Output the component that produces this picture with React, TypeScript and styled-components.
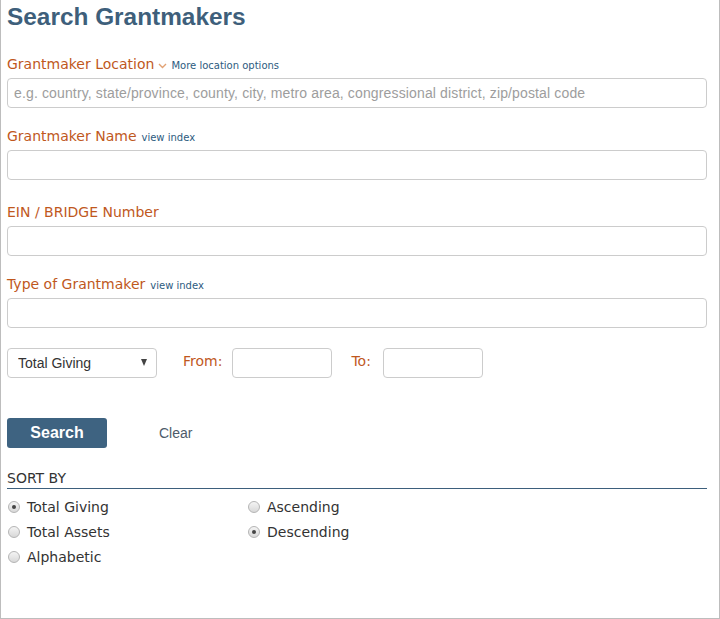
import { FC } from "react";
import styled, { createGlobalStyle } from "styled-components";

const GlobalStyle = createGlobalStyle`
  html, body {
    margin: 0;
    padding: 0;
    background: #ffffff;
  }
  * {
    box-sizing: border-box;
  }
`;

const Page = styled.div`
  width: 720px;
  height: 619px;
  border: 1px solid #bdbdbd;
  border-top: none;
  padding: 0 12px 0 6px;
  font-family: "DejaVu Sans", Verdana, sans-serif;
`;

const Title = styled.h1`
  margin: 0;
  padding-top: 2px;
  height: 32px;
  line-height: 30px;
  font-family: "Liberation Sans", Arial, sans-serif;
  font-size: 24.4px;
  font-weight: bold;
  color: #3e5f7b;
`;

const Field = styled.div<{ $top: number }>`
  margin-top: ${(p) => p.$top}px;
`;

const LabelRow = styled.div`
  display: flex;
  align-items: baseline;
  height: 20px;
  line-height: 20px;
  margin-bottom: 4px;
`;

const Label = styled.label`
  font-size: 14px;
  color: #c0581d;
`;

const SmallLink = styled.a`
  font-size: 10px;
  color: #2d5b80;
  text-decoration: none;
  margin-left: 5px;
`;

const Chevron = styled.svg`
  width: 9px;
  height: 6px;
  margin-left: 4px;
  margin-right: -1px;
  align-self: center;
  position: relative;
  top: 2px;
`;

const TextInput = styled.input<{ $width?: number }>`
  display: block;
  width: ${(p) => (p.$width ? `${p.$width}px` : "100%")};
  height: 30px;
  border: 1px solid #cccccc;
  border-radius: 4px;
  padding: 0 6px;
  font-family: "Liberation Sans", Arial, sans-serif;
  font-size: 14px;
  letter-spacing: 0.14px;
  color: #333;
  background: #fff;
  outline: none;

  &::placeholder {
    color: #9d9d9d;
  }
`;

const RangeRow = styled.div`
  display: flex;
  align-items: center;
  margin-top: 20px;
  height: 30px;
`;

const SelectWrap = styled.div`
  position: relative;
  width: 150px;
  height: 30px;
`;

const Select = styled.select`
  appearance: none;
  width: 100%;
  height: 30px;
  border: 1px solid #cccccc;
  border-radius: 4px;
  padding: 0 0 0 10px;
  font-family: "Liberation Sans", Arial, sans-serif;
  font-size: 14px;
  color: #333;
  background: #fff;
  outline: none;
`;

const SelectArrow = styled.span`
  position: absolute;
  right: 10px;
  top: 11px;
  width: 0;
  height: 0;
  border-left: 3.5px solid transparent;
  border-right: 3.5px solid transparent;
  border-top: 7px solid #444;
  pointer-events: none;
`;

const RangeLabel = styled.span<{ $left: number; $right: number }>`
  font-size: 14px;
  color: #c0581d;
  margin-left: ${(p) => p.$left}px;
  margin-right: ${(p) => p.$right}px;
  position: relative;
  top: -2px;
`;

const Actions = styled.div`
  display: flex;
  align-items: center;
  margin-top: 40px;
  height: 30px;
`;

const SearchButton = styled.button`
  width: 100px;
  height: 30px;
  border: none;
  border-radius: 3px;
  background: #3e6381;
  color: #ffffff;
  font-family: "Liberation Sans", Arial, sans-serif;
  font-size: 16px;
  font-weight: bold;
  cursor: pointer;
`;

const ClearLink = styled.a`
  margin-left: 52px;
  font-family: "Liberation Sans", Arial, sans-serif;
  font-size: 14px;
  color: #4e5b6a;
  text-decoration: none;
`;

const SortHeading = styled.div`
  margin-top: 20px;
  height: 21px;
  line-height: 20px;
  font-size: 14px;
  color: #333;
  border-bottom: 1px solid #3d5f7c;
`;

const SortGrid = styled.div`
  display: grid;
  grid-template-columns: 240px 1fr;
  grid-auto-flow: column;
  grid-template-rows: repeat(3, 25px);
  margin-top: 5px;
`;

const RadioRow = styled.label`
  display: flex;
  align-items: center;
  font-size: 14px;
  color: #333;
  height: 25px;
`;

const Radio = styled.input`
  appearance: none;
  margin: 0 7px 0 1px;
  width: 12px;
  height: 12px;
  border-radius: 50%;
  border: 1px solid #b5b5b5;
  background: linear-gradient(#f4f4f4, #d8d8d8);
  position: relative;

  &:checked::after {
    content: "";
    position: absolute;
    left: 3px;
    top: 3px;
    width: 4px;
    height: 4px;
    border-radius: 50%;
    background: #444;
  }
`;

interface SortOption {
  label: string;
  name: string;
  checked: boolean;
}

const sortOptions: (SortOption | null)[] = [
  { label: "Total Giving", name: "sortField", checked: true },
  { label: "Total Assets", name: "sortField", checked: false },
  { label: "Alphabetic", name: "sortField", checked: false },
  { label: "Ascending", name: "sortDir", checked: false },
  { label: "Descending", name: "sortDir", checked: true },
  null,
];

const App: FC = () => {
  return (
    <>
      <GlobalStyle />
      <Page>
        <Title>Search Grantmakers</Title>

        <Field $top={22}>
          <LabelRow>
            <Label>Grantmaker Location</Label>
            <Chevron viewBox="0 0 9 6">
              <path
                d="M1 1l3.5 3.5L8 1"
                fill="none"
                stroke="#e2a274"
                strokeWidth="1.4"
              />
            </Chevron>
            <SmallLink href="#">More location options</SmallLink>
          </LabelRow>
          <TextInput placeholder="e.g. country, state/province, county, city, metro area, congressional district, zip/postal code" />
        </Field>

        <Field $top={18}>
          <LabelRow>
            <Label>Grantmaker Name</Label>
            <SmallLink href="#">view index</SmallLink>
          </LabelRow>
          <TextInput />
        </Field>

        <Field $top={22}>
          <LabelRow>
            <Label>EIN / BRIDGE Number</Label>
          </LabelRow>
          <TextInput />
        </Field>

        <Field $top={18}>
          <LabelRow>
            <Label>Type of Grantmaker</Label>
            <SmallLink href="#">view index</SmallLink>
          </LabelRow>
          <TextInput />
        </Field>

        <RangeRow>
          <SelectWrap>
            <Select defaultValue="giving">
              <option value="giving">Total Giving</option>
              <option value="assets">Total Assets</option>
            </Select>
            <SelectArrow />
          </SelectWrap>
          <RangeLabel $left={26} $right={10}>
            From:
          </RangeLabel>
          <TextInput $width={100} />
          <RangeLabel $left={19} $right={12}>
            To:
          </RangeLabel>
          <TextInput $width={100} />
        </RangeRow>

        <Actions>
          <SearchButton>Search</SearchButton>
          <ClearLink href="#">Clear</ClearLink>
        </Actions>

        <SortHeading>SORT BY</SortHeading>
        <SortGrid>
          {sortOptions.map((opt, i) =>
            opt ? (
              <RadioRow key={i}>
                <Radio
                  type="radio"
                  name={opt.name}
                  defaultChecked={opt.checked}
                />
                {opt.label}
              </RadioRow>
            ) : (
              <span key={i} />
            )
          )}
        </SortGrid>
      </Page>
    </>
  );
};

export default App;
